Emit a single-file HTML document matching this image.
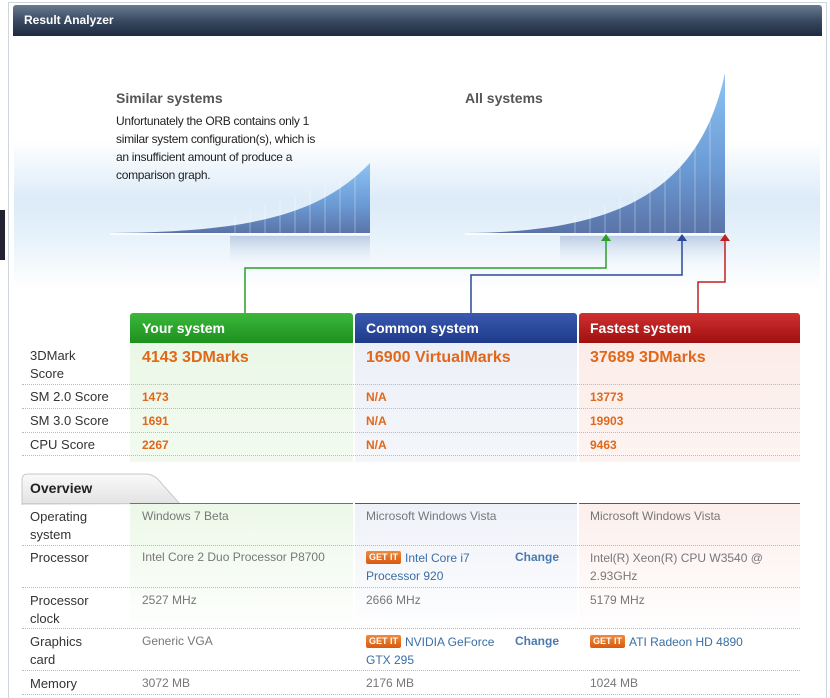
<!DOCTYPE html>
<html><head><meta charset="utf-8"><style>
*{margin:0;padding:0;box-sizing:border-box}
body{width:830px;height:698px;background:#fff;font-family:"Liberation Sans",Arial,sans-serif;position:relative;overflow:hidden}
.a{position:absolute;white-space:nowrap}
.lbl{font-size:13px;color:#333}
.v{font-size:12px;font-weight:bold;color:#e0681a}
.big{font-size:16px;font-weight:bold;color:#e0681a}
.g{font-size:12px;color:#777}
.bl{font-size:12px;color:#3a6ea5}
.ch{font-size:12px;color:#4a7ab0;font-weight:bold}
.sep{position:absolute;left:22px;width:778px;height:0;border-top:1px dotted #bbb}
.get{display:inline-block;background:linear-gradient(#f08a3a,#d85a10);color:#fff;font-size:9px;font-weight:bold;padding:0 3px;line-height:13px;border-radius:2px;margin-right:4px;vertical-align:top;margin-top:2px}
</style></head><body>
<div class="a" style="left:8px;top:2px;width:819px;height:696px;border:1px solid #cfd6de;border-bottom:none"></div>
<div class="a" style="left:0;top:210px;width:5px;height:50px;background:#223"></div>
<div class="a" style="left:13px;top:5px;width:809px;height:31px;background:linear-gradient(#6a7a90,#3a4a62 50%,#1e2a3e);border-radius:3px 3px 0 0"></div>
<div class="a" style="left:24px;top:13px;color:#fff;font-size:12px;font-weight:bold">Result Analyzer</div>
<div class="a" style="left:14px;top:140px;width:806px;height:150px;background:linear-gradient(#fff,#dcebf8 40%,#e4f0fa 60%,#fff)"></div>
<svg class="a" style="left:0;top:0" width="830" height="320">
<defs>
<linearGradient id="cg" x1="0" y1="0" x2="0" y2="1"><stop offset="0" stop-color="#8cc4f4"/><stop offset="0.6" stop-color="#6b9ad4"/><stop offset="1" stop-color="#5a74a8"/></linearGradient>
<linearGradient id="rg" x1="0" y1="0" x2="0" y2="1"><stop offset="0" stop-color="#8aa0c8" stop-opacity=".45"/><stop offset="1" stop-color="#dde9f6" stop-opacity="0"/></linearGradient>
</defs>
<path d="M110 233 C250 232 320 215 370 163 L370 233Z" fill="url(#cg)"/>
<path d="M230 236 L370 236 L370 266 L230 266Z" fill="url(#rg)"/>
<path d="M465 233 C620 232 700 190 725 73 L725 233Z" fill="url(#cg)"/>
<path d="M560 236 L725 236 L725 266 L560 266Z" fill="url(#rg)"/>
<g stroke="#fff" stroke-opacity=".35" stroke-width="1">
<path d="M235 215V233M250 210V233M265 205V233M280 200V233M295 195V233M310 190V233M325 185V233M340 180V233M355 172V233"/>
<path d="M575 215V233M590 210V233M605 205V233M620 198V233M635 190V233M650 180V233M665 168V233M680 150V233M695 130V233M710 105V233"/>
</g>
<line x1="110" y1="234" x2="370" y2="234" stroke="#fff" stroke-width="1.5"/>
<line x1="465" y1="234" x2="725" y2="234" stroke="#fff" stroke-width="1.5"/>
<path d="M245 313V268H606V240" fill="none" stroke="#2aa02a" stroke-width="1.5"/>
<path d="M601 241L606 234L611 241Z" fill="#2aa02a"/>
<path d="M471 313V275H682V240" fill="none" stroke="#2a4a9a" stroke-width="1.5"/>
<path d="M677 241L682 234L687 241Z" fill="#2a4a9a"/>
<path d="M698 313V282H725V240" fill="none" stroke="#c02020" stroke-width="1.5"/>
<path d="M720 241L725 234L730 241Z" fill="#c02020"/>
</svg>
<div class="a" style="left:116px;top:90px;font-size:14px;color:#555;font-weight:bold">Similar systems</div>
<div class="a" style="left:116px;top:112px;font-size:12px;color:#222;line-height:18px;letter-spacing:-0.3px">Unfortunately the ORB contains only 1<br>similar system configuration(s), which is<br>an insufficient amount of produce a<br>comparison graph.</div>
<div class="a" style="left:465px;top:90px;font-size:14px;color:#555;font-weight:bold">All systems</div>
<div class="a" style="left:130px;top:342px;width:223px;height:300px;background:linear-gradient(#eaf7e6,#f4fbf2 50%,#fff)"></div>
<div class="a" style="left:355px;top:342px;width:222px;height:300px;background:linear-gradient(#eceff7,#f6f8fb 50%,#fff)"></div>
<div class="a" style="left:579px;top:342px;width:221px;height:300px;background:linear-gradient(#fcece8,#fdf6f4 50%,#fff)"></div>
<div class="a" style="left:130px;top:313px;width:223px;height:30px;background:linear-gradient(#3cb83c,#1e901e);border-radius:3px 3px 0 0"></div>
<div class="a" style="left:355px;top:313px;width:222px;height:30px;background:linear-gradient(#3a5ab0,#1e3a8a);border-radius:3px 3px 0 0"></div>
<div class="a" style="left:579px;top:313px;width:221px;height:30px;background:linear-gradient(#d03030,#a01010);border-radius:3px 3px 0 0"></div>
<div class="a" style="left:142px;top:320px;color:#fff;font-size:14px;font-weight:bold">Your system</div>
<div class="a" style="left:366px;top:320px;color:#fff;font-size:14px;font-weight:bold">Common system</div>
<div class="a" style="left:590px;top:320px;color:#fff;font-size:14px;font-weight:bold">Fastest system</div>
<div class="a lbl" style="left:30px;top:347px;line-height:18px">3DMark<br>Score</div>
<div class="a big" style="left:142px;top:349px">4143 3DMarks</div>
<div class="a big" style="left:366px;top:349px">16900 VirtualMarks</div>
<div class="a big" style="left:590px;top:349px">37689 3DMarks</div>
<div class="sep" style="top:384px"></div>
<div class="a lbl" style="left:30px;top:389px">SM 2.0 Score</div><div class="a v" style="left:142px;top:390px">1473</div><div class="a v" style="left:366px;top:390px">N/A</div><div class="a v" style="left:590px;top:390px">13773</div>
<div class="sep" style="top:408px"></div>
<div class="a lbl" style="left:30px;top:413px">SM 3.0 Score</div><div class="a v" style="left:142px;top:414px">1691</div><div class="a v" style="left:366px;top:414px">N/A</div><div class="a v" style="left:590px;top:414px">19903</div>
<div class="sep" style="top:432px"></div>
<div class="a lbl" style="left:30px;top:437px">CPU Score</div><div class="a v" style="left:142px;top:438px">2267</div><div class="a v" style="left:366px;top:438px">N/A</div><div class="a v" style="left:590px;top:438px">9463</div>
<div class="sep" style="top:455px"></div>
<div class="a" style="left:14px;top:462px;width:806px;height:42px;background:#fff"></div>
<svg class="a" style="left:20px;top:472px" width="160" height="34"><defs><linearGradient id="tg" x1="0" y1="0" x2="0" y2="1"><stop offset="0" stop-color="#fafafa"/><stop offset="1" stop-color="#e2e2e2"/></linearGradient></defs><path d="M2 33V8Q2 2 8 2H125Q135 2 142 12L160 32" fill="url(#tg)" stroke="#c8c8c8"/></svg>
<div class="a" style="left:30px;top:480px;font-size:14px;font-weight:bold;color:#222">Overview</div>
<div class="a" style="left:22px;top:503px;width:108px;border-top:1px solid #ccc"></div>
<div class="a" style="left:130px;top:503px;width:223px;border-top:1px solid #3a9a3a"></div>
<div class="a" style="left:355px;top:503px;width:222px;border-top:1px solid #3a5a9a"></div>
<div class="a" style="left:579px;top:503px;width:221px;border-top:1px solid #c03030"></div>
<div class="a" style="left:130px;top:504px;width:223px;height:130px;background:linear-gradient(#ecf8e8,#fff)"></div>
<div class="a" style="left:355px;top:504px;width:222px;height:130px;background:linear-gradient(#eef1f8,#fff)"></div>
<div class="a" style="left:579px;top:504px;width:221px;height:130px;background:linear-gradient(#fcefec,#fff)"></div>
<div class="a lbl" style="left:30px;top:508px;line-height:18px">Operating<br>system</div>
<div class="a g" style="left:142px;top:509px">Windows 7 Beta</div><div class="a g" style="left:366px;top:509px">Microsoft Windows Vista</div><div class="a g" style="left:590px;top:509px">Microsoft Windows Vista</div>
<div class="sep" style="top:545px"></div>
<div class="a lbl" style="left:30px;top:550px">Processor</div>
<div class="a g" style="left:142px;top:550px">Intel Core 2 Duo Processor P8700</div>
<div class="a bl" style="left:366px;top:549px;line-height:18px"><span class="get">GET IT</span>Intel Core i7<br>Processor 920</div>
<div class="a ch" style="left:515px;top:550px">Change</div>
<div class="a g" style="left:590px;top:549px;line-height:18px">Intel(R) Xeon(R) CPU W3540 @<br>2.93GHz</div>
<div class="sep" style="top:587px"></div>
<div class="a lbl" style="left:30px;top:592px;line-height:18px">Processor<br>clock</div>
<div class="a g" style="left:142px;top:593px">2527 MHz</div><div class="a g" style="left:366px;top:593px">2666 MHz</div><div class="a g" style="left:590px;top:593px">5179 MHz</div>
<div class="sep" style="top:628px"></div>
<div class="a lbl" style="left:30px;top:633px;line-height:18px">Graphics<br>card</div>
<div class="a g" style="left:142px;top:634px">Generic VGA</div>
<div class="a bl" style="left:366px;top:633px;line-height:18px"><span class="get">GET IT</span>NVIDIA GeForce<br>GTX 295</div>
<div class="a ch" style="left:515px;top:634px">Change</div>
<div class="a bl" style="left:590px;top:633px;line-height:18px"><span class="get">GET IT</span>ATI Radeon HD 4890</div>
<div class="sep" style="top:670px"></div>
<div class="a lbl" style="left:30px;top:676px">Memory</div>
<div class="a g" style="left:142px;top:676px">3072 MB</div><div class="a g" style="left:366px;top:676px">2176 MB</div><div class="a g" style="left:590px;top:676px">1024 MB</div>
<div class="sep" style="top:694px"></div>
</body></html>
